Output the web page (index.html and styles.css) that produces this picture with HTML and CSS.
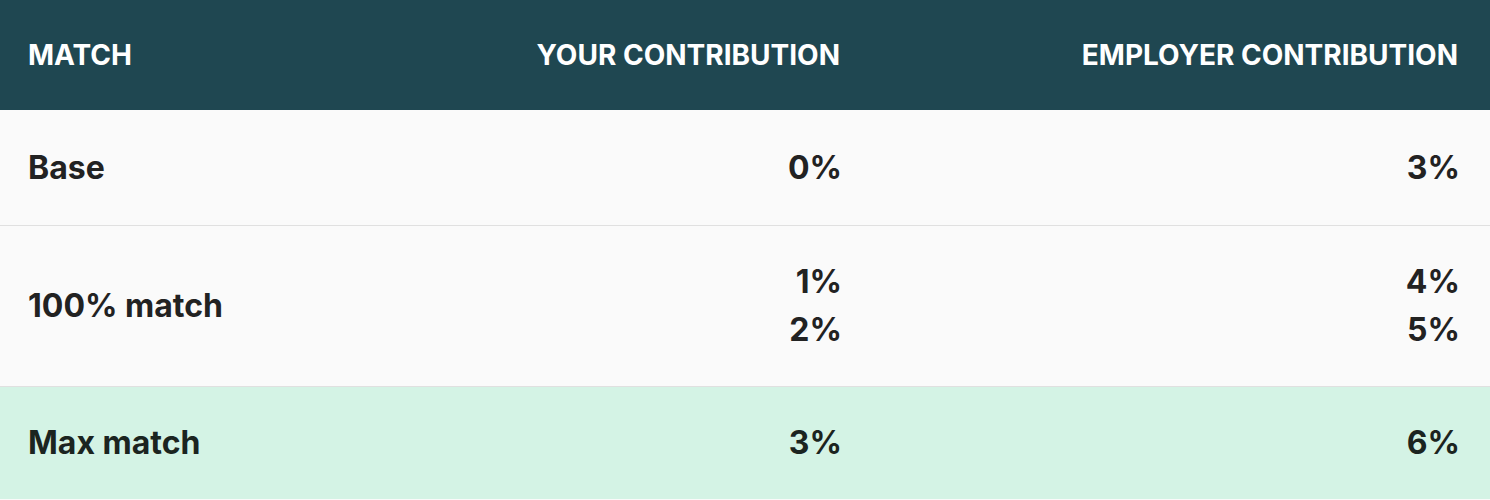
FILE: index.html
```html
<!DOCTYPE html>
<html lang="en">
<head>
<meta charset="utf-8">
<title>Match table</title>
<link rel="stylesheet" href="styles.css">
</head>
<body>
<div class="table">
  <div class="row head">
    <div class="cell">MATCH</div>
    <div class="cell num">YOUR CONTRIBUTION</div>
    <div class="cell num">EMPLOYER CONTRIBUTION</div>
  </div>
  <div class="row body first">
    <div class="cell">Base</div>
    <div class="cell num">0%</div>
    <div class="cell num">3%</div>
  </div>
  <div class="row body">
    <div class="cell">100% match</div>
    <div class="cell num"><div>1%</div><div>2%</div></div>
    <div class="cell num"><div>4%</div><div>5%</div></div>
  </div>
  <div class="row body max">
    <div class="cell">Max match</div>
    <div class="cell num">3%</div>
    <div class="cell num">6%</div>
  </div>
</div>
</body>
</html>
```
FILE: styles.css
```css
html, body {
  margin: 0;
  padding: 0;
  background: #fafafa;
}
body {
  font-family: Inter, "Noto Sans", "Liberation Sans", sans-serif;
  font-weight: 700;
  color: #222222;
}
.table {
  display: flex;
  flex-direction: column;
  width: 1490px;
}
.row {
  display: grid;
  grid-template-columns: 440px 432px 618px;
  align-items: center;
}
.cell {
  padding: 0 32px 0 28px;
  white-space: nowrap;
}
.num {
  text-align: right;
}
.body .num {
  padding-right: 30px;
}
.head {
  background: #1f4751;
  color: #ffffff;
  font-size: 28px;
  height: 110px;
}
.body {
  background: #fafafa;
  font-size: 32px;
  line-height: 48px;
  padding: 32px 0;
  border-top: 1px solid #e0e0e0;
}
.first {
  border-top: none;
  padding: 34px 0 33px;
}
.max {
  background: #d4f3e5;
  color: #1b2420;
}
```
